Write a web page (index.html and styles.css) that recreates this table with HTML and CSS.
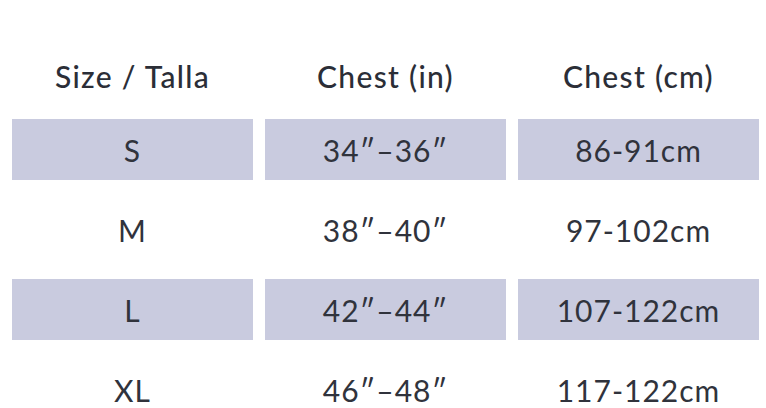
FILE: index.html
```html
<!DOCTYPE html>
<html>
<head>
<meta charset="utf-8">
<link rel="stylesheet" href="styles.css">
</head>
<body>
<div class="chart">
  <div class="head">
    <div class="hcell">Size / Talla</div>
    <div class="hcell">Chest (in)</div>
    <div class="hcell">Chest (cm)</div>
  </div>
  <div class="rows">
    <div class="cell shade">S</div>
    <div class="cell shade">34″–36″</div>
    <div class="cell shade">86-91cm</div>
    <div class="cell">M</div>
    <div class="cell">38″–40″</div>
    <div class="cell">97-102cm</div>
    <div class="cell shade">L</div>
    <div class="cell shade">42″–44″</div>
    <div class="cell shade">107-122cm</div>
    <div class="cell">XL</div>
    <div class="cell">46″–48″</div>
    <div class="cell">117-122cm</div>
  </div>
</div>
</body>
</html>
```
FILE: styles.css
```css
html, body {
  margin: 0;
  padding: 0;
  background: #ffffff;
}
body {
  font-family: Lato, "Open Sans", sans-serif;
  color: #2b2e37;
  overflow: hidden;
}
.chart {
  padding: 46px 7px 0 12px;
}
.head, .rows {
  display: grid;
  grid-template-columns: 241px 241px 241px;
  column-gap: 12px;
}
.head {
  margin-bottom: 12px;
}
.rows {
  row-gap: 19px;
}
.hcell {
  height: 61px;
  line-height: 61px;
  text-align: center;
  font-size: 30px;
  font-weight: 500;
  letter-spacing: 1.3px;
}
.cell {
  height: 61px;
  line-height: 63px;
  text-align: center;
  font-size: 30px;
  font-weight: 400;
  letter-spacing: 1px;
  color: #30333c;
}
.shade {
  background: #c9cbdf;
}
```
